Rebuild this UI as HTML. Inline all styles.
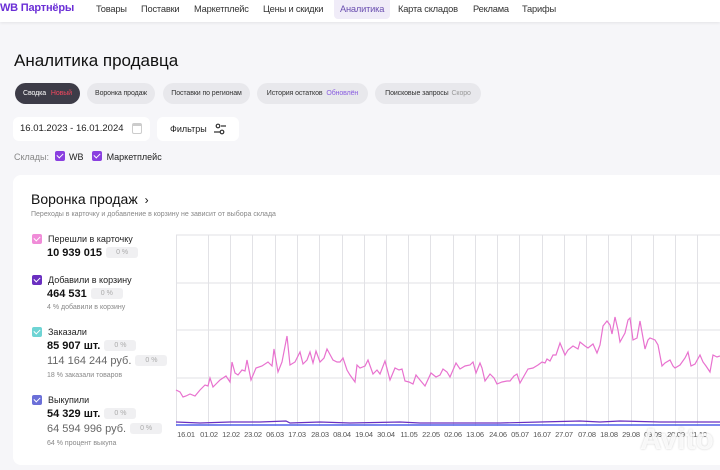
<!DOCTYPE html>
<html><head><meta charset="utf-8"><style>
*{margin:0;padding:0;box-sizing:border-box}
body{width:720px;height:470px;overflow:hidden;background:#f6f6f9;font-family:"Liberation Sans","DejaVu Sans",sans-serif;color:#222;position:relative}
.hdr{position:absolute;left:0;top:0;width:720px;height:22px;background:#fff;box-shadow:0 1px 3px rgba(0,0,0,.08)}
.hdr span{position:absolute;top:4px;font-size:9.3px;color:#333;letter-spacing:-0.2px;white-space:nowrap}
.logo{left:0;font-size:11px!important;color:#6b2fd6!important;font-weight:bold;top:2px!important}
.act{background:#f0ecf8;padding:4px 6px 0;top:0!important;height:19px;border-radius:0 0 4px 4px;color:#6b4fb0!important}
h1{position:absolute;left:14px;top:51px;font-size:17px;font-weight:normal;color:#111}
.tab{position:absolute;top:83px;height:21px;border-radius:11px;background:#e8e8ec;font-size:7px;color:#333;line-height:21px;text-align:center;white-space:nowrap;letter-spacing:-0.1px}
.box{position:absolute;background:#fff;border-radius:6px;font-size:9.5px;color:#222}
.cb{display:inline-block;width:10px;height:10px;border-radius:2px;background:#8a3fe0;position:relative;vertical-align:-1px}
.cb:after{content:"";position:absolute;left:3px;top:1px;width:3px;height:5px;border:solid #fff;border-width:0 1.3px 1.3px 0;transform:rotate(45deg)}
.card{position:absolute;left:13px;top:175px;width:720px;height:290px;background:#fff;border-radius:8px}
.lg{position:absolute;left:32px;font-size:9px;color:#222}
.lg .t{position:absolute;left:16px;top:0;white-space:nowrap}
.lg .cb{position:absolute;left:0;top:0}
.v{position:absolute;left:15px;font-size:11px;font-weight:bold;white-space:nowrap;color:#111}
.v2{position:absolute;left:15px;font-size:11px;color:#666;white-space:nowrap}
.p{display:inline-block;background:#f0f0f2;color:#aaa;font-size:7px;font-weight:normal;padding:2px 10px;border-radius:3px;margin-left:4px;vertical-align:2px}
.s{position:absolute;left:15px;font-size:7px;color:#888;white-space:nowrap}
.xl{position:absolute;top:430px;font-size:7.5px;color:#555;width:30px;text-align:center;letter-spacing:-0.2px}
</style></head><body>
<div class="hdr">
<span class="logo">WB Партнёры</span>
<span style="left:96px">Товары</span>
<span style="left:141px">Поставки</span>
<span style="left:194px">Маркетплейс</span>
<span style="left:263px">Цены и скидки</span>
<span class="act" style="left:334px">Аналитика</span>
<span style="left:398px">Карта складов</span>
<span style="left:473px">Реклама</span>
<span style="left:522px">Тарифы</span>
</div>
<h1>Аналитика продавца</h1>
<div class="tab" style="left:15px;width:65px;background:#3d3c48;color:#fff">Сводка <span style="color:#f0475e;margin-left:3px">Новый</span></div>
<div class="tab" style="left:87px;width:68px">Воронка продаж</div>
<div class="tab" style="left:163px;width:87px">Поставки по регионам</div>
<div class="tab" style="left:257px;width:111px">История остатков <span style="color:#8a5ee0;margin-left:2px">Обновлён</span></div>
<div class="tab" style="left:375px;width:106px">Поисковые запросы <span style="color:#999;margin-left:1px">Скоро</span></div>
<div class="box" style="left:13px;top:117px;width:137px;height:24px;line-height:24px;padding-left:7px">16.01.2023 - 16.01.2024
<span style="position:absolute;right:8px;top:6px;width:10px;height:11px;border:1px solid #ccc;border-radius:2px;border-top-width:3px"></span></div>
<div class="box" style="left:157px;top:117px;width:82px;height:24px;line-height:24px;padding-left:13px;font-size:9px">Фильтры
<svg style="position:absolute;right:13px;top:6px" width="12" height="12" viewBox="0 0 12 12" fill="none" stroke="#333" stroke-width="1.2"><circle cx="4" cy="3" r="1.8"/><path d="M7 3h5M8 9H0"/><circle cx="8" cy="9" r="1.8" fill="#fff"/></svg></div>
<div style="position:absolute;left:14px;top:151px;font-size:9px;color:#888">Склады: <span class="cb" style="margin-left:3px"></span> <span style="color:#222;margin-left:2px">WB</span> <span class="cb" style="margin-left:6px"></span> <span style="color:#222;margin-left:2px">Маркетплейс</span></div>
<div class="card"></div>
<div style="position:absolute;left:31px;top:191px;font-size:14px;color:#111">Воронка продаж <span style="font-size:12px;margin-left:3px">›</span></div>
<div style="position:absolute;left:31px;top:211px;font-size:7px;color:#888">Переходы в карточку и добавление в корзину не зависит от выбора склада</div>
<div class="lg" style="top:234px"><span class="cb" style="background:#f08cd8"></span><span class="t">Перешли в карточку</span><div class="v" style="top:13px">10 939 015<span class="p">0 %</span></div></div>
<div class="lg" style="top:275px"><span class="cb" style="background:#6a2fc0"></span><span class="t">Добавили в корзину</span><div class="v" style="top:13px">464 531<span class="p">0 %</span></div><div class="s" style="top:29px">4 % добавили в корзину</div></div>
<div class="lg" style="top:327px"><span class="cb" style="background:#6ed4d4"></span><span class="t">Заказали</span><div class="v" style="top:13px">85 907 шт.<span class="p">0 %</span></div><div class="v2" style="top:28px">114 164 244 руб.<span class="p">0 %</span></div><div class="s" style="top:45px">18 % заказали товаров</div></div>
<div class="lg" style="top:395px"><span class="cb" style="background:#6b6fd8"></span><span class="t">Выкупили</span><div class="v" style="top:13px">54 329 шт.<span class="p">0 %</span></div><div class="v2" style="top:28px">64 594 996 руб.<span class="p">0 %</span></div><div class="s" style="top:45px">64 % процент выкупа</div></div>
<svg style="position:absolute;left:0;top:0" width="720" height="470">
<g stroke="#e2e2e6" stroke-width="1">
<path d="M176 235H720M176 283H720M176 330H720M176 378H720"/>
<path d="M176.5 235V426M208.5 235V426M230.5 235V426M252.5 235V426M275.5 235V426M297.5 235V426M319.5 235V426M342.5 235V426M364.5 235V426M386.5 235V426M408.5 235V426M430.5 235V426M453.5 235V426M475.5 235V426M497.5 235V426M519.5 235V426M542.5 235V426M564.5 235V426M586.5 235V426M608.5 235V426M631.5 235V426M653.5 235V426M675.5 235V426M697.5 235V426"/>
</g>
<polyline fill="none" stroke="#e872cf" stroke-width="1.2" points="176,390 180,392 183,397 186,396 190,394 195,396 200,390 205,385 208,386 210,378 213,387 217,383 220,380 226,376 230,382 232,362 235,373 238,375 242,370 245,371 247,360 251,380 256,368 262,366 268,362 272,366 274,349 278,372 282,362 287,336 290,365 295,362 300,352 303,364 307,360 310,352 313,363 316,351 320,362 324,358 327,349 333,360 337,362 340,362 343,358 347,370 350,375 355,382 357,365 360,368 365,366 368,360 373,374 377,370 380,374 385,361 390,380 395,368 399,370 402,369 405,381 409,382 413,384 416,375 420,380 425,386 431,373 436,377 440,375 443,369 447,372 450,377 456,363 460,369 465,366 470,365 473,362 476,373 480,363 482,368 485,381 490,374 494,378 497,384 502,382 507,381 510,381 514,376 517,374 520,383 524,376 528,369 533,368 538,365 542,362 545,363 547,359 550,361 553,355 556,355 560,343 565,355 568,350 573,346 578,349 580,342 585,346 588,348 593,344 597,353 600,345 603,326 607,321 610,325 612,334 615,317 618,330 620,342 625,333 628,320 630,318 633,340 637,338 640,321 645,349 648,340 650,338 655,340 658,345 662,366 665,363 670,360 673,366 675,368 680,365 685,358 688,352 691,366 695,364 700,355 703,362 706,366 710,372 713,355 717,357 720,356"/>
<polyline fill="none" stroke="#6a2fc0" stroke-width="1.2" points="176,422 200,423 230,422 260,422 286,421 290,423 320,422 350,423 400,422 420,423 450,423 500,423 540,422 580,421 600,422 620,421 660,422 700,422 720,422"/>
<path d="M176 425H720" stroke="#5160e8" stroke-width="1.5"/>
</svg>
<div class="xl" style="left:171px">16.01</div><div class="xl" style="left:194px">01.02</div><div class="xl" style="left:216px">12.02</div><div class="xl" style="left:238px">23.02</div><div class="xl" style="left:260px">06.03</div><div class="xl" style="left:282px">17.03</div><div class="xl" style="left:305px">28.03</div><div class="xl" style="left:327px">08.04</div><div class="xl" style="left:349px">19.04</div><div class="xl" style="left:371px">30.04</div><div class="xl" style="left:394px">11.05</div><div class="xl" style="left:416px">22.05</div><div class="xl" style="left:438px">02.06</div><div class="xl" style="left:460px">13.06</div><div class="xl" style="left:483px">24.06</div><div class="xl" style="left:505px">05.07</div><div class="xl" style="left:527px">16.07</div><div class="xl" style="left:549px">27.07</div><div class="xl" style="left:572px">07.08</div><div class="xl" style="left:594px">18.08</div><div class="xl" style="left:616px">29.08</div><div class="xl" style="left:638px">09.09</div><div class="xl" style="left:661px">20.09</div><div class="xl" style="left:683px">01.10</div>
<div style="position:absolute;left:640px;top:423px;font-size:30px;font-weight:bold;color:rgba(255,255,255,.85);text-shadow:0 0 2px rgba(0,0,0,.2)">Avito</div>
</body></html>
